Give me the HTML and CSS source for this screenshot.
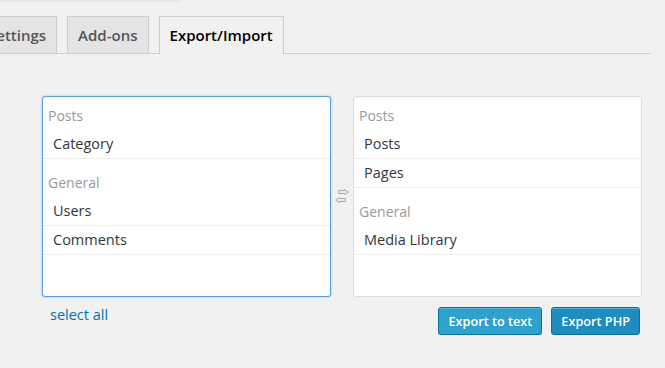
FILE: index.html
```html
<!DOCTYPE html>
<html lang="en">
<head>
    <meta charset="UTF-8">
    <title>Export/Import</title>
    <link rel="stylesheet" href="styles.css">
</head>
<body>
    <div class="strip"></div>
    <div class="wrap">
        <h2 class="nav-tab-wrapper">
            <a class="nav-tab" href="#">Settings</a>
            <a class="nav-tab" href="#">Add-ons</a>
            <a class="nav-tab nav-tab-active" href="#">Export/Import</a>
        </h2>

        <div class="export">
            <div class="lists">
                <ul class="list list-focus">
                    <li class="group">Posts</li>
                    <li class="item">Category</li>
                    <li class="group">General</li>
                    <li class="item">Users</li>
                    <li class="item">Comments</li>
                </ul>
                <div class="swap">
                    <svg class="swap-icon" width="14" height="14" viewBox="0 0 14 14">
                        <path d="M3.5 1.5 H9.5 V0.5 L13.5 3 L9.5 5.5 V4.5 H3.5 Z" fill="#ececec" stroke="#aaa" stroke-width="1"/>
                        <path d="M10.5 9.5 H4.5 V8.5 L0.5 11 L4.5 13.5 V12.5 H10.5 Z" fill="#ececec" stroke="#aaa" stroke-width="1"/>
                    </svg>
                </div>
                <ul class="list">
                    <li class="group">Posts</li>
                    <li class="item">Posts</li>
                    <li class="item">Pages</li>
                    <li class="group">General</li>
                    <li class="item">Media Library</li>
                </ul>
            </div>
            <div class="actions">
                <a class="select-all" href="#">select all</a>
                <div class="buttons">
                    <button class="button">Export to text</button>
                    <button class="button button-dark">Export PHP</button>
                </div>
            </div>
        </div>
    </div>
</body>
</html>
```

FILE: styles.css
```css
body {
    margin: 0;
    background-color: #f1f1f1;
    font-family: "Open Sans", sans-serif;
    font-size: 14px;
    color: #32373c;
}
.strip {
    width: 182px;
    height: 2px;
    background-color: #e8e8e8;
}
.wrap {
    margin: 0 14px 0 0;
}
.nav-tab-wrapper {
    display: flex;
    margin: 14px 0 0 -23px;
    padding: 0;
    border-bottom: 1px solid #ccc;
    font-size: 15px;
    font-weight: 600;
}
.nav-tab {
    display: block;
    margin-right: 10px;
    padding: 6px 10px;
    line-height: 24px;
    border: 1px solid #ccc;
    border-bottom: none;
    background-color: #e4e4e4;
    color: #555;
    text-decoration: none;
}
.nav-tab-active {
    margin-bottom: -1px;
    padding-bottom: 7px;
    background-color: #f1f1f1;
    color: #000;
}
.export {
    width: 600px;
    margin: 42px 0 0 42px;
}
.lists {
    display: flex;
    align-items: center;
}
.list {
    flex: none;
    box-sizing: border-box;
    width: 289px;
    height: 201px;
    margin: 0;
    padding: 0;
    list-style: none;
    background-color: #fff;
    border: 1px solid #ddd;
    border-radius: 3px;
    box-shadow: inset 0 1px 2px rgba(0, 0, 0, 0.05);
}
.list-focus {
    border-color: #5b9dd9;
    box-shadow: 0 0 2px rgba(30, 140, 190, 0.6);
}
.group {
    padding: 10px 5px 5px;
    line-height: 18px;
    color: #999;
}
.item + .group {
    margin-top: 5px;
}
.item {
    padding: 5px 10px;
    line-height: 18px;
    font-size: 14.5px;
    border-bottom: 1px solid #eee;
}
.swap {
    flex: none;
    display: flex;
    justify-content: center;
    width: 22px;
    margin-top: -1px;
}
.swap-icon {
    flex: none;
    display: block;
}
.actions {
    display: flex;
    justify-content: space-between;
    align-items: flex-start;
    margin-top: 10px;
}
.select-all {
    margin: -1px 0 0 8px;
    line-height: 18px;
    font-size: 14.5px;
    color: #0073aa;
    text-decoration: none;
}
.buttons {
    display: flex;
    gap: 9px;
    margin-right: 2px;
}
.button {
    height: 28px;
    padding: 0 9px 1px;
    border: 1px solid #0074a2;
    border-radius: 3px;
    background-color: #2ea2cc;
    box-shadow: inset 0 1px 0 rgba(120, 200, 230, 0.5), 0 1px 0 rgba(0, 0, 0, 0.15);
    color: #fff;
    font-family: "Open Sans", sans-serif;
    font-size: 12.7px;
    font-weight: 600;
    cursor: pointer;
}
.button-dark {
    background-color: #1e8cbe;
    border-color: #0074a2;
    box-shadow: inset 0 1px 0 rgba(120, 200, 230, 0.6);
}
```
